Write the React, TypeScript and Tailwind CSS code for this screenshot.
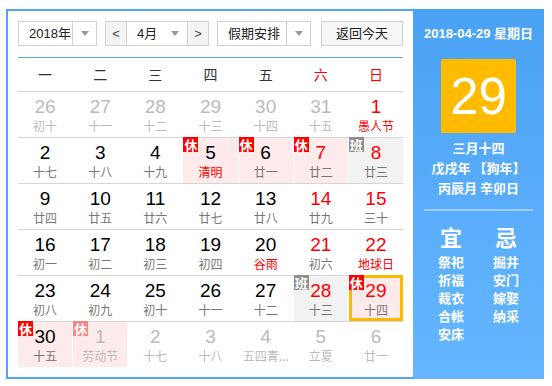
import React from "react";

type Cell = {
  d: string;
  l: string;
  other?: boolean;
  red?: boolean;
  lred?: boolean;
  badge?: "休" | "班";
  bg?: "pink" | "gray";
  sel?: boolean;
};

const rows: Cell[][] = [
  [
    { d: "26", l: "初十", other: true },
    { d: "27", l: "十一", other: true },
    { d: "28", l: "十二", other: true },
    { d: "29", l: "十三", other: true },
    { d: "30", l: "十四", other: true },
    { d: "31", l: "十五", other: true },
    { d: "1", l: "愚人节", red: true, lred: true },
  ],
  [
    { d: "2", l: "十七" },
    { d: "3", l: "十八" },
    { d: "4", l: "十九" },
    { d: "5", l: "清明", lred: true, badge: "休", bg: "pink" },
    { d: "6", l: "廿一", badge: "休", bg: "pink" },
    { d: "7", l: "廿二", red: true, badge: "休", bg: "pink" },
    { d: "8", l: "廿三", red: true, badge: "班", bg: "gray" },
  ],
  [
    { d: "9", l: "廿四" },
    { d: "10", l: "廿五" },
    { d: "11", l: "廿六" },
    { d: "12", l: "廿七" },
    { d: "13", l: "廿八" },
    { d: "14", l: "廿九", red: true },
    { d: "15", l: "三十", red: true },
  ],
  [
    { d: "16", l: "初一" },
    { d: "17", l: "初二" },
    { d: "18", l: "初三" },
    { d: "19", l: "初四" },
    { d: "20", l: "谷雨", lred: true },
    { d: "21", l: "初六", red: true },
    { d: "22", l: "地球日", red: true, lred: true },
  ],
  [
    { d: "23", l: "初八" },
    { d: "24", l: "初九" },
    { d: "25", l: "初十" },
    { d: "26", l: "十一" },
    { d: "27", l: "十二" },
    { d: "28", l: "十三", red: true, badge: "班", bg: "gray" },
    { d: "29", l: "十四", red: true, badge: "休", bg: "pink", sel: true },
  ],
  [
    { d: "30", l: "十五", badge: "休", bg: "pink" },
    { d: "1", l: "劳动节", other: true, badge: "休", bg: "pink" },
    { d: "2", l: "十七", other: true },
    { d: "3", l: "十八", other: true },
    { d: "4", l: "五四青...", other: true },
    { d: "5", l: "立夏", other: true },
    { d: "6", l: "廿一", other: true },
  ],
];

const weekdays = ["一", "二", "三", "四", "五", "六", "日"];

function Arrow() {
  return (
    <svg width="8" height="5" viewBox="0 0 8 5">
      <path d="M0 0 L8 0 L4 5 Z" fill="#9a9a9a" />
    </svg>
  );
}

function DayCell({ c }: { c: Cell }) {
  const bg = c.bg === "pink" ? "bg-[#fdeaea]" : c.bg === "gray" ? "bg-[#f2f2f2]" : "";
  const num = c.other ? "text-[#bbbbbb]" : c.red ? "text-[#ff0000]" : "text-black";
  const lun = c.other ? "text-[#bbbbbb]" : c.lred ? "text-[#ff0000]" : "text-[#777777]";
  const badgeBg =
    c.badge === "班" ? "bg-[#8f8f8f]" : c.other ? "bg-[#f88686]" : "bg-[#ff0000]";
  return (
    <div className={`relative h-[45px] flex flex-col items-center pt-[5px] ${bg}`}>
      {c.sel && <div className="absolute inset-0 -top-px border-[3px] border-[#fdb900]" />}
      {c.badge && (
        <div
          className={`absolute left-0 -top-px w-[15px] h-[15px] flex items-center justify-center text-white text-[13px] leading-none font-bold ${badgeBg}`}
          style={{ fontFamily: '"Noto Sans CJK SC", sans-serif' }}
        >
          {c.badge}
        </div>
      )}
      <div
        className={`relative text-[19px] leading-[20px] ${num}`}
        style={{ fontFamily: '"Liberation Sans", Arial, sans-serif' }}
      >
        {c.d}
      </div>
      <div
        className={`relative mt-[2px] text-[12px] leading-[14px] whitespace-nowrap ${lun}`}
        style={{ fontFamily: '"Noto Sans CJK SC", sans-serif' }}
      >
        {c.l}
      </div>
    </div>
  );
}

export default function App() {
  const cjk = { fontFamily: '"Liberation Sans", "Noto Sans CJK SC", sans-serif' };
  return (
    <div className="w-[552px] h-[386px] bg-white pt-[9px] pl-[6px]" style={cjk}>
      <div className="flex w-[538px] h-[370px]">
        {/* Left */}
        <div className="w-[407px] h-[370px] border-l-2 border-t-2 border-b-2 border-[#4ea6f5] pl-[10px] pr-[10px] pt-[10px]">
          {/* controls */}
          <div className="flex h-[25px] text-[13px] text-[#222]">
            <div className="w-[79px] h-[25px] flex border border-[#d0d0d0] bg-white">
              <div className="flex-1 flex items-center pl-[10px]">2018年</div>
              <div className="w-[24px] border-l border-[#d0d0d0] flex items-center justify-center">
                <Arrow />
              </div>
            </div>
            <div className="ml-[8px] w-[104px] h-[25px] flex border border-[#d0d0d0]">
              <div className="w-[21px] bg-[#f4f4f4] border-r border-[#d0d0d0] flex items-center justify-center text-[13px] text-[#444]">
                &lt;
              </div>
              <div className="flex-1 flex items-center pl-[10px] pr-[8px] justify-between bg-white">
                <span>4月</span>
                <Arrow />
              </div>
              <div className="w-[21px] bg-[#f4f4f4] border-l border-[#d0d0d0] flex items-center justify-center text-[13px] text-[#444]">
                &gt;
              </div>
            </div>
            <div className="ml-[8px] w-[94px] h-[25px] flex border border-[#d0d0d0] bg-white">
              <div className="flex-1 flex items-center pl-[10px] overflow-hidden whitespace-nowrap">假期安排</div>
              <div className="w-[24px] border-l border-[#d0d0d0] flex items-center justify-center">
                <Arrow />
              </div>
            </div>
            <div className="ml-[10px] w-[82px] h-[25px] border border-[#d0d0d0] bg-[#f6f6f6] flex items-center justify-center">
              返回今天
            </div>
          </div>
          <div className="mt-[11px] h-px bg-[#5aa8f0]" />
          {/* weekday header */}
          <div className="grid grid-cols-7 gap-x-px h-[34px] border-b border-[#d6d6d6] text-[14px]">
            {weekdays.map((w, i) => (
              <div
                key={w}
                className={`flex items-center justify-center ${i >= 5 ? "text-[#ff0000]" : "text-[#333]"}`}
                style={{ fontFamily: '"Noto Sans CJK SC", sans-serif' }}
              >
                {w}
              </div>
            ))}
          </div>
          {rows.map((r, ri) => (
            <div
              key={ri}
              className={`grid grid-cols-7 gap-x-px ${ri < rows.length - 1 ? "border-b border-[#d6d6d6]" : ""}`}
            >
              {r.map((c, ci) => (
                <DayCell key={ci} c={c} />
              ))}
            </div>
          ))}
        </div>
        {/* Right */}
        <div
          className="w-[131px] h-[370px] bg-gradient-to-b from-[#4aa2f4] to-[#65b6ff] flex flex-col items-center text-white"
          style={{ fontFamily: '"Liberation Sans", "Noto Sans CJK SC", sans-serif' }}
        >
          <div className="mt-[16px] text-[13px] leading-[18px] font-bold whitespace-nowrap">2018-04-29 星期日</div>
          <div className="mt-[16px] w-[75px] h-[74px] rounded-[2px] bg-[#ffbb00] flex items-center justify-center">
            <span className="text-[51px] leading-none" style={{ fontFamily: '"Liberation Sans", Arial, sans-serif' }}>
              29
            </span>
          </div>
          <div className="mt-[5px] text-[13px] leading-[20px] font-bold text-center" style={{ fontFamily: '"Noto Sans CJK SC", sans-serif' }}>
            <div>三月十四</div>
            <div>戊戌年 【狗年】</div>
            <div>丙辰月 辛卯日</div>
          </div>
          <div className="mt-[11px] w-[109px] h-[2px] bg-white/40" />
          <div className="mt-[12px] flex gap-[11px]" style={{ fontFamily: '"Noto Sans CJK SC", sans-serif' }}>
            <div className="w-[44px] flex flex-col items-center">
              <div className="text-[22px] leading-[26px] font-bold">宜</div>
              <div className="mt-[4px] text-[13px] leading-[18px] font-bold flex flex-col items-center">
                <span>祭祀</span>
                <span>祈福</span>
                <span>裁衣</span>
                <span>合帐</span>
                <span>安床</span>
              </div>
            </div>
            <div className="w-[44px] flex flex-col items-center">
              <div className="text-[22px] leading-[26px] font-bold">忌</div>
              <div className="mt-[4px] text-[13px] leading-[18px] font-bold flex flex-col items-center">
                <span>掘井</span>
                <span>安门</span>
                <span>嫁娶</span>
                <span>纳采</span>
              </div>
            </div>
          </div>
        </div>
      </div>
    </div>
  );
}
